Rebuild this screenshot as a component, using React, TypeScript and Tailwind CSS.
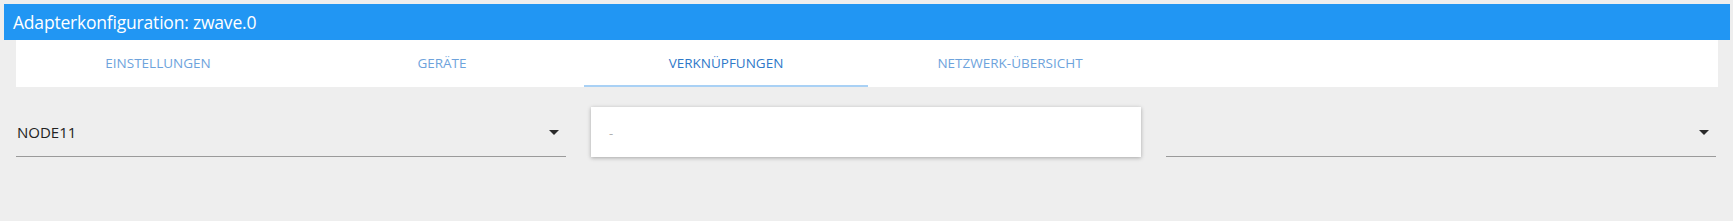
const tabs = ['Einstellungen', 'Geräte', 'Verknüpfungen', 'Netzwerk-Übersicht'];

function Caret() {
  return (
    <svg width="10" height="5" viewBox="0 0 10 5" className="shrink-0">
      <path d="M0 0 L10 0 L5 5 Z" fill="#2a2a2a" />
    </svg>
  );
}

function SelectField({ value }: { value?: string }) {
  return (
    <div className="h-[70px] flex flex-col justify-end">
      <div className="flex items-center justify-between h-[46px] pr-[7px] pb-[2px] border-b border-[#9a9a9a]">
        <span className="text-[15px] text-[#222] leading-none pl-[1px]">{value}</span>
        <Caret />
      </div>
    </div>
  );
}

export default function App() {
  return (
    <div className="w-[1733px] h-[221px] bg-[#eeeeee] pt-[4px] font-['Open_Sans',_'Noto_Sans',_sans-serif]">
      <div className="ml-[4px] w-[1726px] h-[36px] bg-[#2196f3] flex items-center pl-[9px]">
        <span className="text-white text-[17.5px] tracking-[-0.2px]">Adapterkonfiguration: zwave.0</span>
      </div>
      <div className="ml-[16px] w-[1702px] h-[47px] bg-white flex">
        {tabs.map((t, i) => (
          <div
            key={t}
            className={
              i === 2
                ? 'w-[284px] flex items-center justify-center uppercase text-[13.5px] text-[#2f79c9] border-b-[2px] border-[#a9d1f5] pt-[1px]'
                : 'w-[284px] flex items-center justify-center uppercase text-[13.5px] text-[#6ea3dc] border-b-[2px] border-transparent pt-[1px]'
            }
          >
            {t}
          </div>
        ))}
      </div>
      <div className="ml-[16px] w-[1700px] grid grid-cols-3 gap-x-[25px]">
        <SelectField value="NODE11" />
        <div className="pt-[20px]">
          <div className="h-[50px] bg-white shadow-[0_1px_4px_rgba(0,0,0,0.3)] flex items-center pl-[18px] pt-[4px]">
            <span className="text-[13px] text-[#b0b0b0]">-</span>
          </div>
        </div>
        <SelectField />
      </div>
    </div>
  );
}
